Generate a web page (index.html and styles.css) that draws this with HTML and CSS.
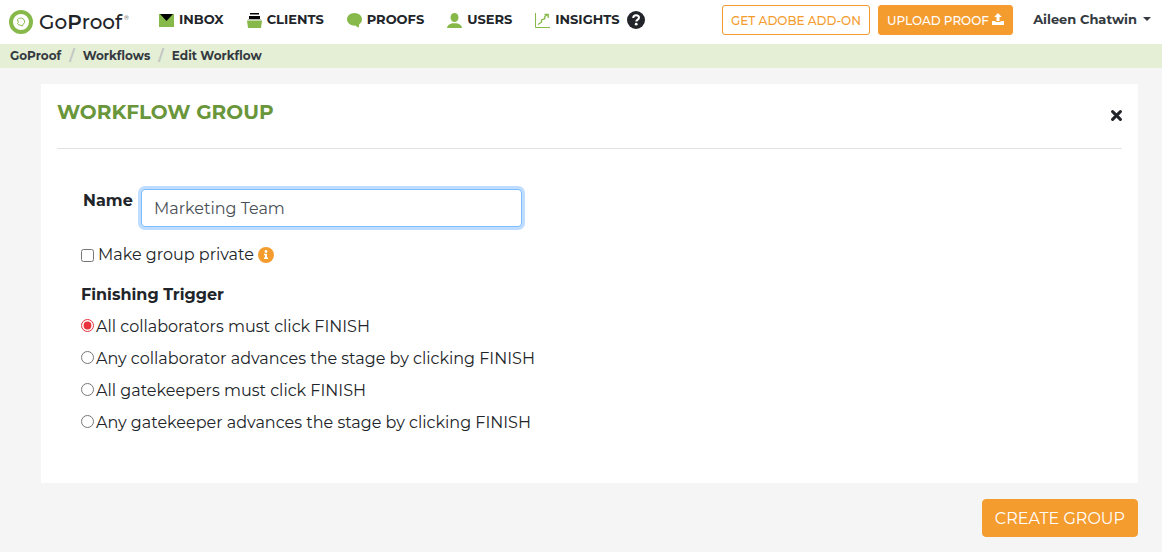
FILE: index.html
```
<!DOCTYPE html>
<html lang="en">
<head>
    <meta charset="UTF-8">
    <meta name="viewport" content="width=device-width, initial-scale=1.0">
    <title>GoProof - Edit Workflow</title>
    <link rel="stylesheet" href="styles.css">
</head>
<body>
    <header class="navbar">
        <a class="brand" href="#">
            <svg width="24" height="24" viewBox="0 0 24 24" fill="none">
                <circle cx="12" cy="12" r="10" stroke="#86b94a" stroke-width="4"/>
                <path d="M8.500 9.500C9.500 8.300 11 8 12.500 8.200c2.300.4 3.500 2.300 3 4.300-.3 1-.9 1.500-1.700 2l-.3 1.500c-1-.8-2.500-.6-3.800-1.200L8.500 13.500l.8-1z" stroke="#86b94a"/>
            </svg>
            <span class="brand-name">Go<b>P</b>roof</span><sup>®</sup>
        </a>
        <nav class="menu">
            <a href="#">
                <svg width="15" height="15" viewBox="0 0 15 15">
                    <path fill="#86b94a" d="M0 1h15v13H0z"/>
                    <path d="M1 1h13L7.500 8z"/>
                </svg>
                INBOX
            </a>
            <a href="#">
                <svg width="15" height="15" viewBox="0 0 15 15">
                    <path d="M3 0h9v1.500H3zM2 3h11v3H2z"/>
                    <path fill="#b8b8b8" d="M1 6h13v1H1z"/>
                    <path fill="#86b94a" d="M0 7.500h15L14 15H1z"/>
                </svg>
                CLIENTS
            </a>
            <a href="#">
                <svg width="15" height="15" viewBox="0 0 15 15">
                    <path fill="#86b94a" d="M7.500 0C3.400 0 0 2.800 0 6.300s3.300 6.300 7.300 6.300c1 0 1.700.6 4.500 2.200l.4-3.500C14 10.300 15 8.500 15 6.300 15 2.800 11.600 0 7.500 0z"/>
                </svg>
                PROOFS
            </a>
            <a href="#">
                <svg width="15" height="15" viewBox="0 0 15 15">
                    <ellipse fill="#86b94a" cx="7.500" cy="4.500" rx="4" ry="4.500"/>
                    <path fill="#86b94a" d="M0 15c.3-3 3-4.800 7.500-4.800S14.700 12 15 15z"/>
                </svg>
                USERS
            </a>
            <a href="#">
                <svg width="15" height="15" viewBox="0 0 15 15" fill="none" stroke="#86b94a">
                    <path d="M.5 0v14.500H15"/>
                    <path stroke-width="1.300" d="M3 11.500l3.500-2.300V7l3.300-1.300V3.500l3-2M9.500 1.500h3.700v3.500"/>
                </svg>
                INSIGHTS
            </a>
            <a class="help" href="#" aria-label="Help">
                <svg width="18" height="18" viewBox="0 0 18 18">
                    <circle cx="9" cy="9" r="9" fill="#212529"/>
                    <path d="M6.200 7C6.300 5 7.500 4.200 9.100 4.200c1.600 0 2.900 1 2.900 2.500 0 1.900-2.700 2-2.700 3.900" fill="none" stroke="#fff" stroke-width="2"/>
                    <circle cx="9.200" cy="13.200" r="1.400" fill="#fff"/>
                </svg>
            </a>
        </nav>
        <div class="actions">
            <button type="button" class="btn btn-sm btn-outline">GET ADOBE ADD-ON</button>
            <button type="button" class="btn btn-sm">
                UPLOAD PROOF
                <svg width="12" height="12" viewBox="0 0 12 12" fill="#fff">
                    <path d="M6 0L2.200 4h2.300v4h3V4h2.300z"/>
                    <path d="M0 8h3.500v1h5V8H12v4H0z"/>
                </svg>
            </button>
            <button type="button" class="user">Aileen Chatwin <span class="caret"></span></button>
        </div>
    </header>

    <nav class="breadcrumb" aria-label="breadcrumb">
        <a href="#">GoProof</a>
        <span>/</span>
        <a href="#">Workflows</a>
        <span>/</span>
        <a href="#">Edit Workflow</a>
    </nav>

    <main class="content">
        <form id="groupForm" class="card">
            <div class="card-header">
                <h1>WORKFLOW GROUP</h1>
                <button type="button" class="close" aria-label="Close">
                    <svg width="11" height="11" viewBox="0 0 11 11">
                        <path d="M1.600 1.600l7.800 7.800M9.400 1.600L1.600 9.400" stroke="#212529" stroke-width="3" stroke-linecap="round"/>
                    </svg>
                </button>
            </div>
            <div class="card-body">
                <div class="name-row">
                    <label for="name">Name</label>
                    <input type="text" id="name" name="name" value="Marketing Team">
                </div>
                <div class="check-row private-row">
                    <input type="checkbox" id="private" name="private">
                    <label for="private">Make group private</label>
                    <svg width="16" height="16" viewBox="0 0 16 16">
                        <circle cx="8" cy="8" r="8" fill="#f59c2f"/>
                        <circle cx="8" cy="4.500" r="1.400" fill="#fff"/>
                        <path fill="#fff" d="M6 6.800h3v3.700h1V12H6v-1.500h1V8.300H6z"/>
                    </svg>
                </div>
                <fieldset>
                    <legend>Finishing Trigger</legend>
                    <div class="check-row">
                        <input type="radio" id="allCollaborators" name="trigger" checked>
                        <label for="allCollaborators">All collaborators must click FINISH</label>
                    </div>
                    <div class="check-row">
                        <input type="radio" id="anyCollaborator" name="trigger">
                        <label for="anyCollaborator">Any collaborator advances the stage by clicking FINISH</label>
                    </div>
                    <div class="check-row">
                        <input type="radio" id="allGatekeepers" name="trigger">
                        <label for="allGatekeepers">All gatekeepers must click FINISH</label>
                    </div>
                    <div class="check-row">
                        <input type="radio" id="anyGatekeeper" name="trigger">
                        <label for="anyGatekeeper">Any gatekeeper advances the stage by clicking FINISH</label>
                    </div>
                </fieldset>
            </div>
        </form>
        <button type="submit" form="groupForm" class="btn submit">CREATE GROUP</button>
    </main>
</body>
</html>
```
FILE: styles.css
```
* {
    box-sizing: border-box;
}
body {
    margin: 0;
    background-color: #f5f5f5;
    color: #212529;
    font-family: Montserrat, Inter, sans-serif;
    font-size: 16px;
    line-height: 24px;
}
a {
    color: inherit;
    text-decoration: none;
}
button, input {
    font-family: inherit;
    margin: 0;
}
button {
    cursor: pointer;
}
svg {
    flex-shrink: 0;
}
.navbar {
    display: flex;
    align-items: center;
    height: 44px;
    padding: 0 11px 4px 9px;
    background-color: #fff;
    white-space: nowrap;
}
.brand {
    display: flex;
    align-items: center;
    width: 150px;
    padding-top: 4px;
}
.brand-name {
    margin-left: 6px;
    font-size: 20px;
    font-weight: 500;
}
.brand-name b {
    font-weight: 600;
}
.brand sup {
    align-self: flex-start;
    margin-left: 2px;
    font-size: 6px;
    line-height: 16px;
}
.menu {
    display: flex;
    align-items: center;
    gap: 23px;
    font-size: 13px;
    font-weight: 700;
    line-height: 13px;
}
.menu a {
    display: flex;
    align-items: flex-start;
    gap: 5px;
}
.menu .help {
    margin-left: -15px;
}
.actions {
    display: flex;
    align-items: center;
    gap: 8px;
    margin-left: auto;
}
.btn {
    height: 38px;
    padding: 0 12px;
    border: 1px solid #f59c2f;
    border-radius: 4px;
    background-color: #f59c2f;
    color: #fff;
    font-size: 16px;
}
.btn-sm {
    height: 30px;
    padding: 0 8px;
    border-radius: 3px;
    font-size: 12px;
    font-weight: 500;
}
.btn-outline {
    background-color: #fff;
    color: #f59c2f;
}
.user {
    display: flex;
    align-items: center;
    gap: 6px;
    margin-left: 12px;
    padding: 0 0 2px;
    border: none;
    background: none;
    color: #343a40;
    font-size: 13px;
    font-weight: 700;
}
.caret {
    border: 4px solid transparent;
    border-top-color: #343a40;
    border-bottom: 0;
}
.breadcrumb {
    display: flex;
    gap: 8px;
    padding: 0 10px;
    background-color: #e5efd6;
    color: #343a40;
    font-size: 12px;
    font-weight: 700;
}
.breadcrumb span {
    color: #c3c8c3;
    font-size: 14px;
}
.content {
    display: flex;
    flex-direction: column;
    padding: 16px 24px 15px 41px;
}
.card {
    padding: 16px;
    background-color: #fff;
}
.card-header {
    display: flex;
    justify-content: space-between;
    align-items: flex-start;
    padding-bottom: 24px;
    border-bottom: 1px solid #e2e2e2;
}
h1 {
    margin: 0;
    color: #6a963b;
    font-size: 20px;
    font-weight: 700;
    line-height: 24px;
}
.close {
    display: flex;
    margin-top: 10px;
    padding: 0;
    border: none;
    background: none;
}
.card-body {
    padding: 40px 24px 24px;
}
.name-row {
    display: flex;
    padding-left: 2px;
}
.name-row label {
    width: 58px;
    font-weight: 700;
}
.name-row input {
    width: 381px;
    height: 38px;
    padding: 0 12px;
    border: 1px solid #80bdff;
    border-radius: 4px;
    outline: none;
    box-shadow: 0 0 0 3px #bfdeff;
    color: #495057;
    font-size: 16px;
}
.check-row {
    display: flex;
    align-items: center;
    gap: 2px;
    margin-bottom: 8px;
}
.check-row input {
    width: 13px;
    height: 13px;
    accent-color: #e9323c;
}
.check-row input[type="radio"] {
    margin-bottom: 3px;
}
.private-row {
    gap: 4px;
    margin: 16px 0;
}
fieldset {
    min-width: 0;
    margin: 0;
    padding: 0;
    border: none;
}
legend {
    margin-bottom: 8px;
    padding: 0;
    font-weight: 700;
}
.submit {
    align-self: flex-end;
    margin-top: 16px;
}
```
